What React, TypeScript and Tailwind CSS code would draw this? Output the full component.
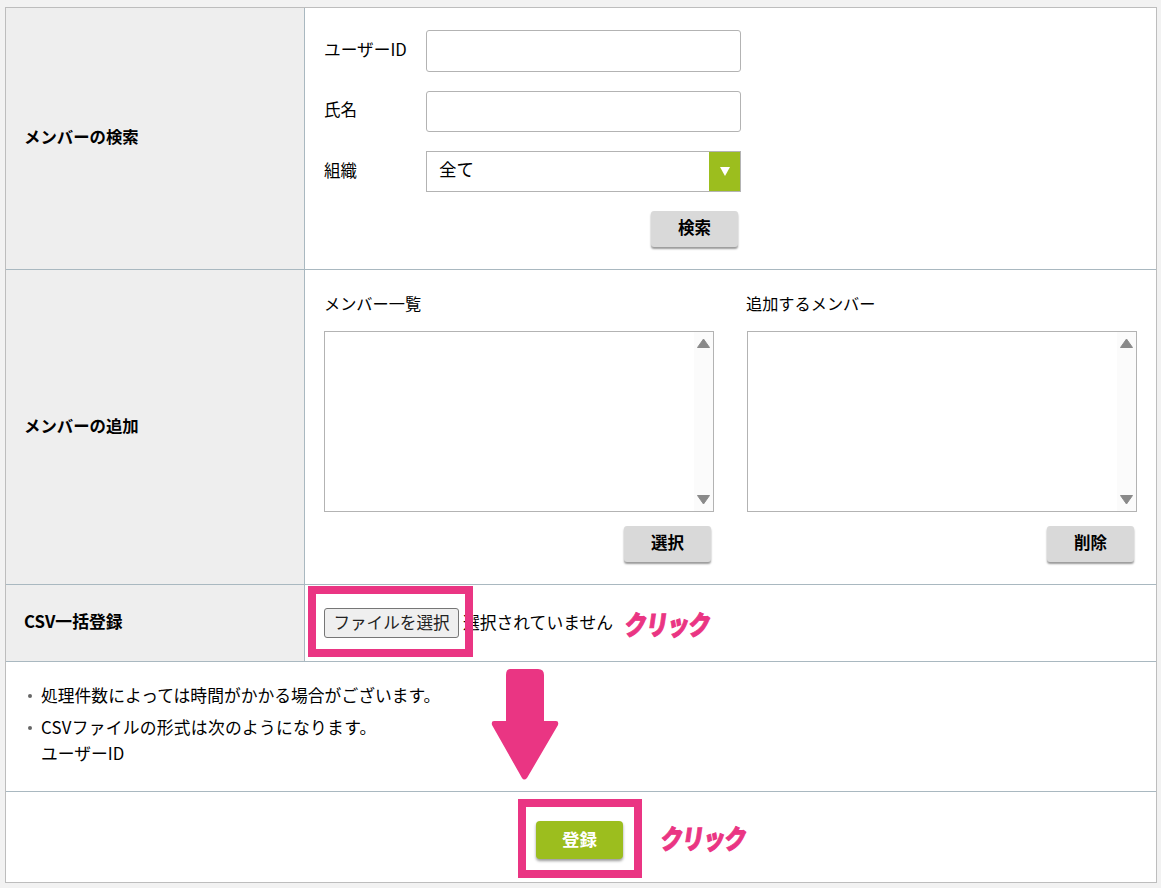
import React from 'react';

const GrayButton = ({ label, className }: { label: string; className: string }) => (
  <button className={`h-[36px] w-[87px] rounded-[3px] bg-[#d9d9d9] pb-[3px] text-[16.5px] font-bold text-black shadow-[0_2px_2px_rgba(0,0,0,0.4)] ${className}`}>
    {label}
  </button>
);

const ListBox = () => (
  <div className="flex h-[181px] w-[390px] justify-end border border-[#b3b3b3] bg-white">
    <div className="flex w-[19px] flex-col items-center justify-between bg-[#fbfbfb] py-[6px]">
      <svg width="13" height="10" viewBox="0 0 13 10"><path d="M6.5 1 L12.5 9.5 H0.5 Z" fill="#8a8a8a" stroke="#8a8a8a" strokeLinejoin="round" /></svg>
      <svg width="13" height="10" viewBox="0 0 13 10"><path d="M0.5 0.5 H12.5 L6.5 9 Z" fill="#8a8a8a" stroke="#8a8a8a" strokeLinejoin="round" /></svg>
    </div>
  </div>
);

const Click = ({ className }: { className: string }) => (
  <span className={`absolute origin-top-left text-[27px] leading-none font-black tracking-[-1px] text-[#ea3583] [-webkit-text-stroke:1px_#ea3583] [transform:scaleX(0.82)_skewX(-10deg)] ${className}`}>
    クリック
  </span>
);

const Bullet = () => (
  <span className="flex w-[16px] justify-center pr-[6px]"><span className="h-[4px] w-[4px] rounded-full bg-[#666]" /></span>
);

export default function App() {
  return (
    <div className="relative h-[888px] w-[1161px] overflow-hidden bg-[#f2f2f2] pt-[7px] pl-[5px] font-['Noto_Sans_CJK_JP','Liberation_Sans',sans-serif] text-[16.5px] text-black">
      <div className="w-[1152px] border border-[#bdbdbd] bg-white">
        {/* Search */}
        <div className="flex h-[262px] border-b border-[#a9b8c0]">
          <div className="flex w-[299px] items-center border-r border-[#a9b8c0] bg-[#eeeeee] pb-[5px] pl-[18px] text-[16.4px] font-bold">メンバーの検索</div>
          <div className="flex flex-1 flex-col pt-[22px] pl-[19px]">
            <div className="flex h-[42px] items-center">
              <span className="w-[102px] pb-[3px] text-[16.7px]">ユーザーID</span>
              <div className="h-[42px] w-[315px] rounded-[3px] border border-[#b3b3b3]" />
            </div>
            <div className="mt-[19px] flex h-[41px] items-center">
              <span className="w-[102px] pb-[4px]">氏名</span>
              <div className="h-[41px] w-[315px] rounded-[3px] border border-[#b3b3b3]" />
            </div>
            <div className="mt-[19px] flex h-[41px] items-center">
              <span className="w-[102px] pb-[3px]">組織</span>
              <div className="flex h-[41px] w-[315px] items-center justify-between border border-[#b3b3b3] pl-[12px] text-[17.5px]">
                <span className="-mt-[5px]">全て</span>
                <div className="flex h-full w-[31px] items-center justify-center bg-[#9cbe1e] pb-[1px]">
                  <svg width="10" height="9" viewBox="0 0 10 9"><path d="M0 0 H10 L5 9 Z" fill="#fff" /></svg>
                </div>
              </div>
            </div>
            <GrayButton label="検索" className="mt-[19px] ml-[327px]" />
          </div>
        </div>

        {/* Add members */}
        <div className="flex h-[315px] border-b border-[#a9b8c0]">
          <div className="flex w-[299px] items-center border-r border-[#a9b8c0] bg-[#eeeeee] pb-[3px] pl-[18px] text-[16.4px] font-bold">メンバーの追加</div>
          <div className="flex flex-1 gap-[33px] pl-[19px]">
            <div className="flex flex-col">
              <div className="mt-[21px] mb-[16px] h-[24px] text-[16.2px] leading-[24px]">メンバー一覧</div>
              <ListBox />
              <GrayButton label="選択" className="mt-[14px] ml-[300px]" />
            </div>
            <div className="flex flex-col">
              <div className="mt-[21px] mb-[16px] -ml-[1px] h-[24px] text-[16.2px] leading-[24px]">追加するメンバー</div>
              <ListBox />
              <GrayButton label="削除" className="mt-[14px] ml-[300px]" />
            </div>
          </div>
        </div>

        {/* CSV */}
        <div className="flex h-[77px] border-b border-[#a9b8c0]">
          <div className="flex w-[299px] items-center border-r border-[#a9b8c0] bg-[#eeeeee] pb-[3px] pl-[18px] text-[16.8px] font-bold">CSV一括登録</div>
          <div className="flex flex-1 items-center pl-[19px]">
            <button className="h-[30px] w-[135px] rounded-[3px] border border-[#767676] bg-[#efefef] pb-[1px] text-[16.6px] text-[#222]">ファイルを選択</button>
            <span className="ml-[4px] text-[16.8px]">選択されていません</span>
          </div>
        </div>

        {/* Notes */}
        <div className="h-[130px] border-b border-[#a9b8c0] pt-[21px] pl-[19px] text-[16.8px]">
          <div className="flex h-[26px] items-center">
            <Bullet />
            処理件数によっては時間がかかる場合がございます。
          </div>
          <div className="mt-[6px] flex h-[26px] items-center">
            <Bullet />
            <span className="tracking-[0.25px]">CSVファイルの形式は次のようになります。</span>
          </div>
          <div className="flex h-[26px] items-center pl-[16px]">ユーザーID</div>
        </div>

        {/* Submit */}
        <div className="flex h-[90px] items-center justify-center pt-[6px]">
          <button className="ml-[-3px] h-[38px] w-[87px] rounded-[4px] bg-[#9cbe1e] pb-[2px] text-[17.5px] font-bold text-white shadow-[0_2px_3px_rgba(0,0,0,0.4)]">登録</button>
        </div>
      </div>

      {/* Annotations */}
      <div className="absolute top-[586px] left-[308px] h-[71px] w-[165px] border-[8px] border-[#ea3583]" />
      <div className="absolute top-[799px] left-[518px] h-[79px] w-[124px] border-[8px] border-[#ea3583]" />
      <Click className="top-[610px] left-[627px]" />
      <Click className="top-[824px] left-[663px]" />
      <svg className="absolute top-[669px] left-[491px]" width="68" height="112" viewBox="0 0 68 112">
        <path d="M19 0 H47 Q53 0 53 6 V52 H65 Q68 52 67 56 L36 109 Q33 112 31 109 L1 56 Q0 52 3 52 H15 V6 Q15 0 19 0 Z" fill="#ea3583" />
      </svg>
    </div>
  );
}
